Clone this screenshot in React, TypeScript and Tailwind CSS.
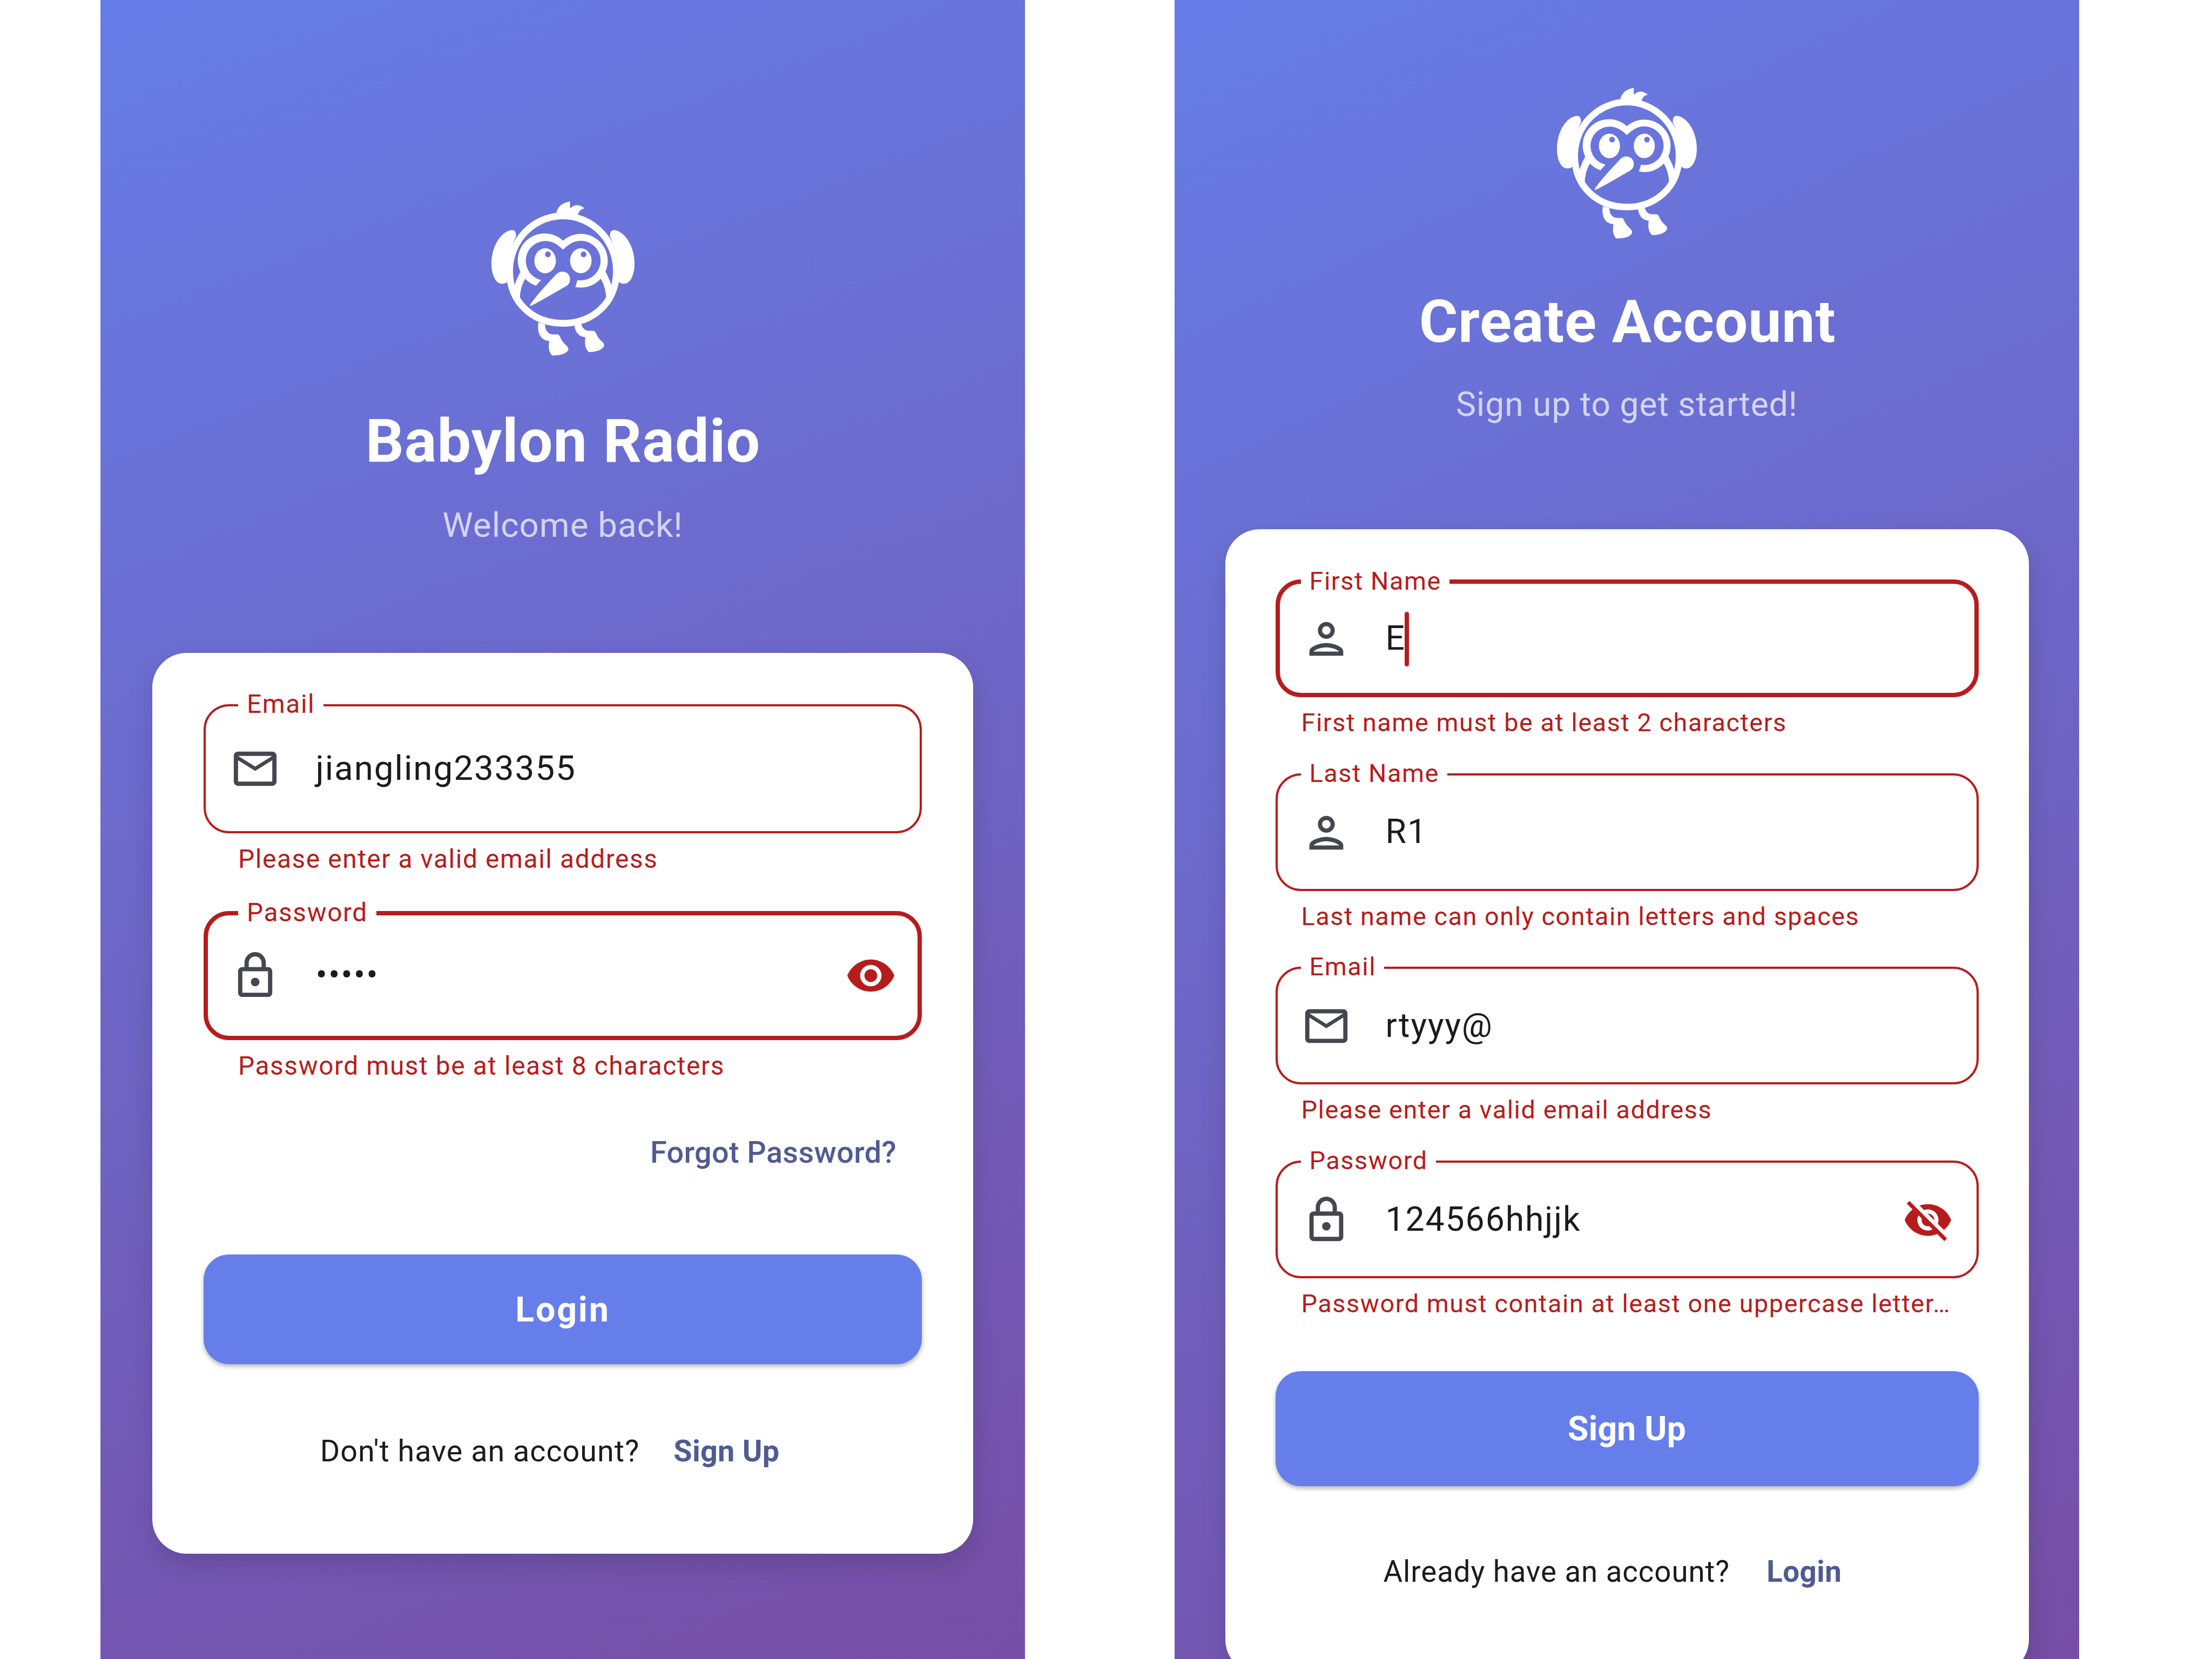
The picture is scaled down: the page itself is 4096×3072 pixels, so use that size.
import type { ReactNode } from 'react';

type IconName = 'mail' | 'lock' | 'person' | 'eye' | 'eyeOff';

const ICON_PATHS: Record<IconName, string> = {
  mail: 'M22 6c0-1.1-.9-2-2-2H4c-1.1 0-2 .9-2 2v12c0 1.1.9 2 2 2h16c1.1 0 2-.9 2-2V6zm-2 0-8 5-8-5h16zm0 12H4V8l8 5 8-5v10z',
  lock: 'M18 8h-1V6c0-2.76-2.24-5-5-5S7 3.24 7 6v2H6c-1.1 0-2 .9-2 2v10c0 1.1.9 2 2 2h12c1.1 0 2-.9 2-2V10c0-1.1-.9-2-2-2zM9 6c0-1.66 1.34-3 3-3s3 1.34 3 3v2H9V6zm9 14H6V10h12v10zm-6-3c1.1 0 2-.9 2-2s-.9-2-2-2-2 .9-2 2 .9 2 2 2z',
  person:
    'M12 6c1.1 0 2 .9 2 2s-.9 2-2 2-2-.9-2-2 .9-2 2-2m0 10c2.7 0 5.8 1.29 6 2H6c.23-.72 3.31-2 6-2m0-12C9.79 4 8 5.79 8 8s1.79 4 4 4 4-1.79 4-4-1.79-4-4-4zm0 10c-2.67 0-8 1.34-8 4v2h16v-2c0-2.66-5.33-4-8-4z',
  eye: 'M12 4.5C7 4.5 2.73 7.61 1 12c1.73 4.39 6 7.5 11 7.5s9.27-3.11 11-7.5c-1.73-4.39-6-7.5-11-7.5zM12 17c-2.76 0-5-2.24-5-5s2.24-5 5-5 5 2.24 5 5-2.24 5-5 5zm0-8c-1.66 0-3 1.34-3 3s1.34 3 3 3 3-1.34 3-3-1.34-3-3-3z',
  eyeOff:
    'M12 7c2.76 0 5 2.24 5 5 0 .65-.13 1.26-.36 1.83l2.92 2.92c1.51-1.26 2.7-2.89 3.43-4.75-1.73-4.39-6-7.5-11-7.5-1.4 0-2.74.25-3.98.7l2.16 2.16C10.74 7.13 11.35 7 12 7zM2 4.27l2.28 2.28.46.46C3.08 8.3 1.78 10.02 1 12c1.73 4.39 6 7.5 11 7.5 1.55 0 3.03-.3 4.38-.84l.42.42L19.73 22 21 20.73 3.27 3 2 4.27zM7.53 9.8l1.55 1.55c-.05.21-.08.43-.08.65 0 1.66 1.34 3 3 3 .22 0 .44-.03.65-.08l1.55 1.55c-.67.33-1.41.53-2.2.53-2.76 0-5-2.24-5-5 0-.79.2-1.53.53-2.2zm4.31-.78 3.15 3.15.02-.16c0-1.66-1.34-3-3-3l-.17.01z',
};

function Icon({ name, className }: { name: IconName; className: string }) {
  return (
    <svg viewBox="0 0 24 24" fill="currentColor" className={`shrink-0 ${className}`}>
      <path d={ICON_PATHS[name]} />
    </svg>
  );
}

/* Kiwi bird mascot wearing headphones */
function Mascot({ className }: { className: string }) {
  return (
    <svg viewBox="0 100 1246 1000" fill="#fff" className={`shrink-0 ${className}`}>
      <path
        d="M291 545C291 356 440 203 623 203S955 356 955 545C955 745 806 871 623 871S291 745 291 545Z"
        fill="none"
        stroke="#fff"
        strokeWidth="42"
      />
      <path d="M316 655Q332 595 360 548L388 593Q352 655 355 732L320 700ZM930 655Q914 595 886 548L858 593Q894 655 891 732L926 700Z" />
      <path d="M623 357A167 167 0 1 0 455 637L487 602A123 123 0 1 1 575 375Q600 390 623 413Q646 390 671 375A123 123 0 1 1 713 602L700 645A167 167 0 1 0 623 357Z" />
      <path
        fillRule="evenodd"
        d="M445 482a67 78 0 1 0 134 0a67 78 0 1 0 -134 0ZM511 442a18 18 0 1 0 36 0a18 18 0 1 0 -36 0ZM667 482a67 78 0 1 0 134 0a67 78 0 1 0 -134 0ZM733 442a18 18 0 1 0 36 0a18 18 0 1 0 -36 0Z"
      />
      <path d="M416 761Q440 715 580 567C610 535 667 548 667 598Q667 628 640 641Q470 740 428 760Q420 763 416 761Z" />
      <path d="M331 330Q332 291 308 291C250 291 178 380 178 500C178 570 205 625 243 625Q262 625 273 616L300 600V400ZM915 330Q914 291 938 291C996 291 1068 380 1068 500C1068 570 1041 625 1003 625Q984 625 973 616L946 600V400Z" />
      <path d="M580 190Q592 125 667 113V157Q710 115 757 157Q725 160 715 197L640 215Z" />
      <path d="M470 865C462 920 475 975 538 981C530 1020 535 1050 555 1071C600 1072 635 1065 654 1042Q660 1028 650 1015C630 995 615 980 607 960Q600 941 590 940H560C530 938 511 915 512 878Z" />
      <path d="M694 880C698 930 725 955 762 958C756 1000 762 1030 782 1048Q786 1051 792 1050C830 1048 860 1040 877 1016Q882 1003 873 991C850 972 838 955 829 934Q823 918 810 917H782C758 915 742 900 736 872Z" />
    </svg>
  );
}

interface FieldProps {
  label: string;
  icon: IconName;
  value: string;
  error: string;
  focused?: boolean;
  trailing?: IconName;
  caret?: boolean;
}

function LoginField({ label, icon, value, error, focused, trailing }: FieldProps) {
  return (
    <div className="flex flex-col">
      <div
        className={`relative flex h-[239px] items-center rounded-[47px] border-[#b71c1c] ${
          focused ? 'border-8 pr-[39.5px] pl-[39.5px]' : 'border-4 pr-[43.5px] pl-[43.5px]'
        }`}
      >
        <span
          className={`absolute bg-white px-[16px] text-[47.8px] leading-[48px] tracking-[1.6px] whitespace-nowrap text-[#b71c1c] ${
            focused ? '-top-[29px] left-[56px]' : '-top-[28px] left-[60px]'
          }`}
        >
          {label}
        </span>
        <Icon name={icon} className="size-[95px] text-[#46464f]" />
        <span className="-mt-[2px] ml-[65px] grow text-[63.8px] leading-[76px] tracking-[1.9px] text-[#1b1b1f]">
          {value}
        </span>
        {trailing && <Icon name={trailing} className="size-[95px] text-[#b71c1c]" />}
      </div>
      <p className="mt-[16px] pl-[64px] text-[47.8px] leading-[64px] tracking-[1.6px] whitespace-nowrap text-[#b71c1c]">
        {error}
      </p>
    </div>
  );
}

function SignUpField({ label, icon, value, error, focused, trailing, caret }: FieldProps) {
  return (
    <div className="flex flex-col">
      <div
        className={`relative flex h-[218px] items-center rounded-[47px] border-[#b71c1c] ${
          focused ? 'border-8 pr-[39px] pl-[39px]' : 'border-4 pr-[43px] pl-[43px]'
        }`}
      >
        <span
          className={`absolute bg-white pr-[15px] pl-[16px] text-[46.8px] leading-[48px] tracking-[1.56px] whitespace-nowrap text-[#b71c1c] ${
            focused ? '-top-[29px] left-[39px]' : '-top-[28px] left-[43px]'
          }`}
        >
          {label}
        </span>
        <Icon name={icon} className="size-[94px] translate-y-[1px] text-[#46464f]" />
        <span className="relative -mt-[1px] ml-[63px] grow text-[62.5px] leading-[74px] tracking-[1.9px] text-[#1b1b1f]">
          {value}
          {caret && <span className="absolute -top-[12px] left-[35px] h-[101px] w-[8px] rounded-full bg-[#b71c1c]" />}
        </span>
        {trailing && <Icon name={trailing} className="size-[94px] translate-y-[1px] text-[#b71c1c]" />}
      </div>
      <p className="mt-[15px] pl-[48px] text-[46.8px] leading-[64px] tracking-[1.55px] whitespace-nowrap text-[#b71c1c]">
        {error}
      </p>
    </div>
  );
}

function Card({ className, children }: { className: string; children: ReactNode }) {
  return (
    <div className={`flex shrink-0 flex-col rounded-[64px] bg-white shadow-[0_20px_48px_rgba(0,0,0,0.14)] ${className}`}>
      {children}
    </div>
  );
}

function LoginScreen() {
  return (
    <section className="ml-[186px] flex h-[3072px] w-[1712px] shrink-0 flex-col items-center overflow-hidden bg-[linear-gradient(159deg,#667de7_0%,#764ea5_100%)] pt-[369px]">
      <Mascot className="h-[298px] w-[371px]" />
      <h1 className="mt-[84px] pl-[1px] text-[111.5px] leading-[132px] font-bold tracking-[1.05px] text-white">Babylon Radio</h1>
      <p className="mt-[52px] text-[63.7px] leading-[76px] tracking-[1px] text-white/70">Welcome back!</p>
      <Card className="mt-[198px] h-[1668px] w-[1520px] px-[95px] pt-[95px]">
        <div className="flex flex-col gap-[64px]">
          <LoginField label="Email" icon="mail" value="jiangling233355" error="Please enter a valid email address" />
          <LoginField
            label="Password"
            icon="lock"
            value="•••••"
            error="Password must be at least 8 characters"
            trailing="eye"
            focused
          />
        </div>
        <a className="mt-[88px] mr-[47px] self-end text-[55.7px] leading-[80px] font-medium tracking-[0.4px] text-[#4f5b92]">
          Forgot Password?
        </a>
        <button className="mt-[149px] h-[203px] rounded-[47px] bg-[#667eea] pt-[2px] text-[64.5px] font-bold tracking-[2.8px] text-white shadow-[0_4px_9px_rgba(0,0,0,0.3)]">
          Login
        </button>
        <div className="mt-[121px] flex justify-center text-[55.7px] leading-[80px]">
          <span className="tracking-[1px] text-[#1b1b1f]">Don't have an account?</span>
          <a className="ml-[15px] px-[48px] font-bold tracking-[0.3px] text-[#4f5b92]">Sign Up</a>
        </div>
      </Card>
    </section>
  );
}

function SignUpScreen() {
  return (
    <section className="ml-[277px] flex h-[3072px] w-[1675px] shrink-0 flex-col items-center overflow-hidden bg-[linear-gradient(155deg,#667de7_0%,#764ea5_100%)] pt-[159px]">
      <Mascot className="h-[291px] w-[363px]" />
      <h1 className="mt-[81px] pl-[2px] text-[109.3px] leading-[130px] font-bold tracking-[0.85px] text-white">Create Account</h1>
      <p className="mt-[51px] text-[62.4px] leading-[74px] tracking-[0.95px] text-white/70">Sign up to get started!</p>
      <Card className="mt-[194px] h-[2120px] w-[1488px] px-[93px] pt-[93px]">
        <div className="flex flex-col gap-[61.7px]">
          <SignUpField
            label="First Name"
            icon="person"
            value="E"
            error="First name must be at least 2 characters"
            focused
            caret
          />
          <SignUpField label="Last Name" icon="person" value="R1" error="Last name can only contain letters and spaces" />
          <SignUpField label="Email" icon="mail" value="rtyyy@" error="Please enter a valid email address" />
          <SignUpField
            label="Password"
            icon="lock"
            value="124566hhjjk"
            error="Password must contain at least one uppercase letter…"
            trailing="eyeOff"
          />
        </div>
        <button className="mt-[92.5px] h-[213.5px] rounded-[47px] bg-[#667eea] pt-[2px] text-[62.5px] font-bold tracking-[0.2px] text-white shadow-[0_4px_9px_rgba(0,0,0,0.3)]">
          Sign Up
        </button>
        <div className="mt-[119px] flex justify-center pr-[6px] text-[54.7px] leading-[78px]">
          <span className="tracking-[0.9px] text-[#1b1b1f]">Already have an account?</span>
          <a className="ml-[21px] px-[47px] font-bold tracking-[0.5px] text-[#4f5b92]">Login</a>
        </div>
      </Card>
    </section>
  );
}

export default function App() {
  return (
    <main className="flex h-[3072px] w-[4096px] overflow-hidden bg-white font-['Roboto',sans-serif]">
      <LoginScreen />
      <SignUpScreen />
    </main>
  );
}
